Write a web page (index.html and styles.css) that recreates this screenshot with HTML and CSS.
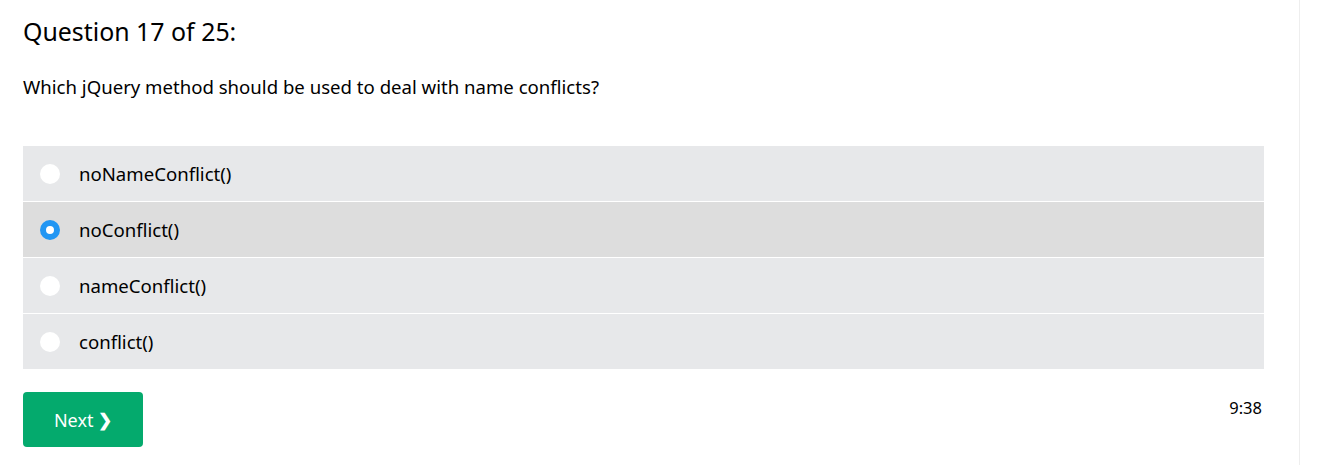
FILE: index.html
```html
<!DOCTYPE html>
<html lang="en">
<head>
<meta charset="utf-8">
<title>Quiz</title>
<link rel="stylesheet" href="styles.css">
</head>
<body>
<div class="page">
  <main class="main">
    <h2 class="qnum">Question 17 of 25:</h2>
    <p class="qtext">Which jQuery method should be used to deal with name conflicts?</p>
    <div class="options">
      <label class="opt"><span class="radio"></span><span class="otext">noNameConflict()</span></label>
      <label class="opt opt-selected"><span class="radio radio-on"></span><span class="otext">noConflict()</span></label>
      <label class="opt"><span class="radio"></span><span class="otext">nameConflict()</span></label>
      <label class="opt"><span class="radio"></span><span class="otext">conflict()</span></label>
    </div>
    <div class="footer">
      <button class="next">Next <span class="chev">&#10095;</span></button>
      <span class="timer">9:38</span>
    </div>
  </main>
</div>
</body>
</html>
```
FILE: styles.css
```css
html, body {
  margin: 0;
  padding: 0;
  background: #fff;
}
body {
  font-family: "Noto Sans", "Open Sans", sans-serif;
  color: #000;
}
.page {
  display: flex;
  min-height: 465px;
}
.main {
  box-sizing: border-box;
  width: 1300px;
  border-right: 1px solid #eeeeee;
  padding: 0 35px 0 23px;
}
.qnum {
  font-size: 24.9px;
  font-weight: 400;
  margin: 13px 0 0;
  line-height: 36px;
}
.qtext {
  font-size: 18.6px;
  margin: 25px 0 0;
  line-height: 26px;
}
.options {
  margin-top: 46px;
  display: flex;
  flex-direction: column;
  gap: 1px;
}
.opt {
  height: 55px;
  background: #e7e8ea;
  display: flex;
  align-items: center;
  padding-left: 17px;
  gap: 19px;
  font-size: 18.6px;
}
.opt-selected {
  background: #dddddd;
}
.radio {
  box-sizing: border-box;
  width: 20px;
  height: 20px;
  border-radius: 50%;
  background: #fff;
  flex: none;
}
.radio-on {
  background: #fff;
  border: 6px solid #2196f3;
}
.footer {
  margin-top: 23px;
  display: flex;
  justify-content: space-between;
  align-items: flex-start;
}
.next {
  width: 120px;
  height: 55px;
  border: none;
  border-radius: 4px;
  background: #04aa6d;
  color: #fff;
  font-family: inherit;
  font-size: 18px;
  padding: 0;
  cursor: pointer;
}
.chev {
  font-size: 17px;
  font-weight: 700;
  position: relative;
  top: -1px;
}
.timer {
  font-size: 16.5px;
  margin-top: 4px;
  margin-right: 2px;
}
```
